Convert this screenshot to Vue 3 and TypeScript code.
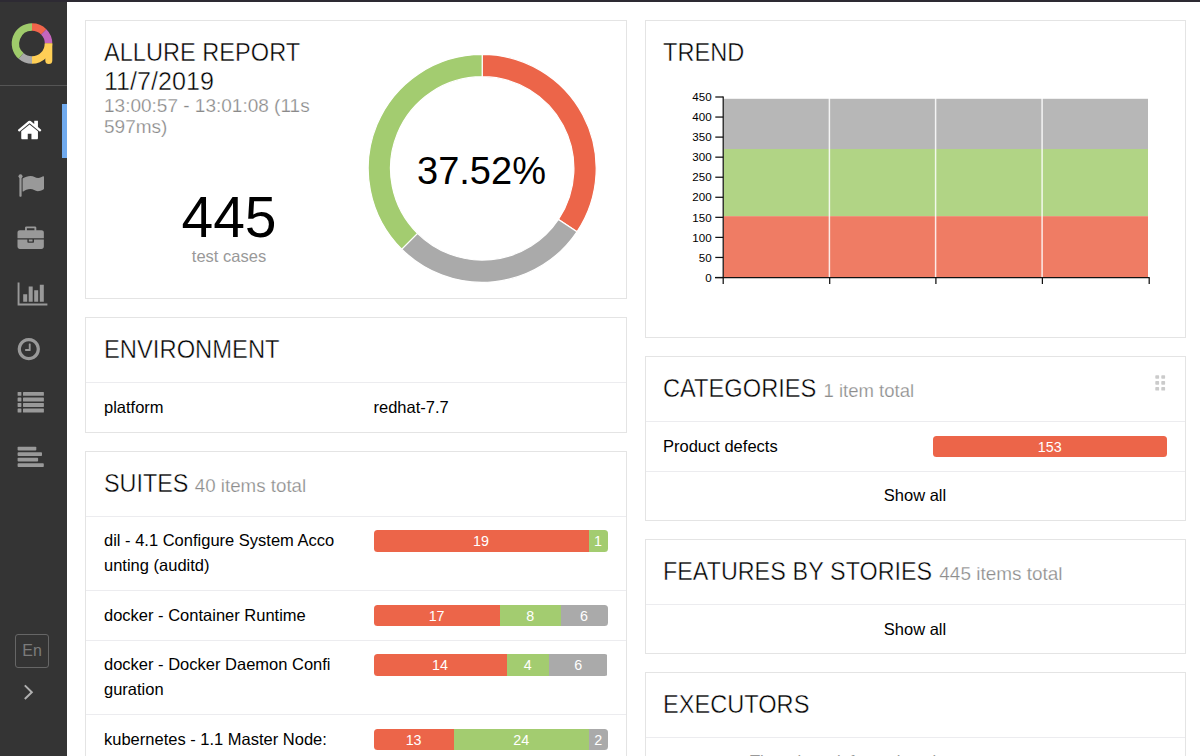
<script setup lang="ts">
type Status = 'failed' | 'passed' | 'skipped'

interface Segment {
  status: Status
  count: number
  width: number
}

interface Suite {
  lines: string[]
  segments: Segment[]
}

const suites: Suite[] = [
  {
    lines: ['dil - 4.1 Configure System Acco', 'unting (auditd)'],
    segments: [
      { status: 'failed', count: 19, width: 215.5 },
      { status: 'passed', count: 1, width: 19 },
    ],
  },
  {
    lines: ['docker - Container Runtime'],
    segments: [
      { status: 'failed', count: 17, width: 126.5 },
      { status: 'passed', count: 8, width: 61 },
      { status: 'skipped', count: 6, width: 47 },
    ],
  },
  {
    lines: ['docker - Docker Daemon Confi', 'guration'],
    segments: [
      { status: 'failed', count: 14, width: 133.4 },
      { status: 'passed', count: 4, width: 42.3 },
      { status: 'skipped', count: 6, width: 58.8 },
    ],
  },
  {
    lines: ['kubernetes - 1.1 Master Node:'],
    segments: [
      { status: 'failed', count: 13, width: 80.4 },
      { status: 'passed', count: 24, width: 135.4 },
      { status: 'skipped', count: 2, width: 18.7 },
    ],
  },
]

// Donut ring, clockwise from twelve o'clock
function ring(cx: number, cy: number, outer: number, inner: number, from: number, to: number): string {
  const pt = (r: number, t: number) => {
    const a = t * Math.PI * 2
    return `${(cx + r * Math.sin(a)).toFixed(2)} ${(cy - r * Math.cos(a)).toFixed(2)}`
  }
  const large = to - from > 0.5 ? 1 : 0
  return `M${pt(outer, from)}A${outer} ${outer} 0 ${large} 1 ${pt(outer, to)}L${pt(inner, to)}A${inner} ${inner} 0 ${large} 0 ${pt(inner, from)}Z`
}

const total = 445
const donut = [
  { status: 'failed', d: ring(115.2, 115.4, 114, 91.7, 0, 153 / total) },
  { status: 'skipped', d: ring(115.2, 115.4, 114, 91.7, 153 / total, 278 / total) },
  { status: 'passed', d: ring(115.2, 115.4, 114, 91.7, 278 / total, 1) },
]

const logo = [
  { color: '#f1654b', d: ring(32, 43.5, 20.3, 12.8, 0, 0.125) },
  { color: '#c566bd', d: ring(32, 43.5, 20.3, 12.8, 0.125, 0.25) },
  { color: '#ffcf56', d: ring(32, 43.5, 20.3, 12.8, 0.25, 0.5) },
  { color: '#a9a9a9', d: ring(32, 43.5, 20.3, 12.8, 0.5, 0.615) },
  { color: '#9fcb6b', d: ring(32, 43.5, 20.3, 12.8, 0.615, 1) },
]

const yTicks = [450, 400, 350, 300, 250, 200, 150, 100, 50, 0]
const tickY = (v: number) => 187.5 - v * 0.4011
const xTicks = [78.5, 185, 291.2, 397.7, 504.5]

const nav = ['home', 'flag', 'briefcase', 'chart', 'clock', 'list', 'align']
</script>

<template>
  <div class="app">
    <aside class="side">
      <div class="brand">
        <svg width="67" height="83" viewBox="0 2 67 83">
          <path v-for="(s, i) in logo" :key="i" :d="s.d" :fill="s.color" />
          <path d="M44.8 43.5H52.3V60.4A3.5 3.5 0 0 1 45.3 60.4V58L43 55L44.8 50Z" fill="#ffcf56" />
        </svg>
      </div>
      <nav class="nav">
        <a v-for="(name, i) in nav" :key="name" class="item" :class="{ active: i === 0 }">
          <svg width="62" height="54.4" :viewBox="`0 ${103.6 + i * 54.4} 62 54.4`" fill="currentColor">
            <g v-if="name === 'home'" transform="translate(16.6 116.6) scale(.0145)">
              <path d="M1472 992v480q0 26-19 45t-45 19h-384v-384h-256v384h-384q-26 0-45-19t-19-45v-480q0-1 .5-3t.5-3l575-474 575 474q1 2 1 6zm223-69l-62 74q-8 9-21 11h-3q-13 0-21-7l-692-577-692 577q-12 8-24 7-13-2-21-11l-62-74q-8-10-7-23.5t11-21.5l719-599q32-26 76-26t76 26l244 204v-195q0-14 9-23t23-9h192q14 0 23 9t9 23v408l219 182q10 8 11 21.5t-7 23.5z" />
            </g>
            <g v-else-if="name === 'flag'">
              <circle cx="20.5" cy="176.2" r="2" />
              <rect x="19.4" y="176" width="2.2" height="20.8" rx=".8" />
              <path d="M22.6 178.6C25 177 28 175.9 30.4 175.9C34 175.9 35.3 178 38.2 178C40.2 178 42 176.8 43 176.3Q44 175.9 44 177V188.6Q44 189.2 43.4 189.5C41.3 190.6 39.6 191.2 37.8 191.2C35 191.2 33.4 189.1 30.2 189.1C27.4 189.1 25.2 190.3 23.4 191.4Q22.6 191.8 22.6 191Z" />
            </g>
            <g v-else-if="name === 'briefcase'" transform="translate(17.5 226.8) scale(.0147)">
              <path d="M640 256h512v-128h-512v128zm1152 640v480q0 66-47 113t-113 47h-1472q-66 0-113-47t-47-113v-480h672v160q0 26 19 45t45 19h320q26 0 45-19t19-45v-160h672zm-768 0v128h-256v-128h256zm768-480v384h-1792v-384q0-66 47-113t113-47h352v-160q0-40 28-68t68-28h576q40 0 68 28t28 68v160h352q66 0 113 47t47 113z" />
            </g>
            <path v-else-if="name === 'chart'" d="M17.6 282.2h1.9v21.1h27.9v1.9H17.6zM23.2 294h4v7.5h-4zM28.7 286.3h4v15.2h-4zM34.2 290.1h4v11.4h-4zM39.8 284.5h4v17h-4z" />
            <g v-else-if="name === 'clock'" transform="translate(15.8 336.3) scale(.0145)">
              <path d="M1024 544v448q0 14-9 23t-23 9h-320q-14 0-23-9t-9-23v-64q0-14 9-23t23-9h224v-352q0-14 9-23t23-9h64q14 0 23 9t9 23zm416 352q0-148-73-273t-198-198-273-73-273 73-198 198-73 273 73 273 198 198 273 73 273-73 198-198 73-273zm224 0q0 209-103 385.5t-279.5 279.5-385.5 103-385.5-103-279.5-279.5-103-385.5 103-385.5 279.5-279.5 385.5-103 385.5 103 279.5 279.5 103 385.5z" />
            </g>
            <g v-else-if="name === 'list'">
              <template v-for="y in [392.5, 398.1, 403.6, 409.2]" :key="y">
                <rect x="17.6" :y="y" width="3.8" height="3.9" rx=".5" />
                <rect x="23" :y="y" width="20.9" height="3.9" rx=".5" />
              </template>
            </g>
            <g v-else>
              <rect x="17.6" y="446.7" width="18.7" height="3.8" rx=".8" />
              <rect x="17.6" y="452.2" width="24.4" height="3.8" rx=".8" />
              <rect x="17.6" y="457.8" width="20.5" height="3.8" rx=".8" />
              <rect x="17.6" y="463.3" width="26.2" height="3.8" rx=".8" />
            </g>
          </svg>
        </a>
      </nav>
      <div class="foot">
        <button class="lang">En</button>
        <svg class="chevron" width="12" height="18" viewBox="0 0 12 18" fill="none">
          <path d="M1.8 2.4L8.8 9.2L1.8 16" stroke="#b0b0b0" stroke-width="2" />
        </svg>
      </div>
    </aside>

    <main class="board">
      <div class="col left">
        <section class="card summary">
          <div class="info">
            <h2 class="title">ALLURE REPORT</h2>
            <h2 class="title date">11/7/2019</h2>
            <div class="time">13:00:57 - 13:01:08 (11s<br>597ms)</div>
            <div class="count">445</div>
            <div class="caption">test cases</div>
          </div>
          <svg class="donut" width="230" height="230" viewBox="0 0 230 230">
            <path v-for="s in donut" :key="s.status" :d="s.d" :class="s.status" stroke="#fff" stroke-width="1.2" />
            <text x="114.5" y="131" text-anchor="middle">37.52%</text>
          </svg>
        </section>

        <section class="card">
          <header class="head"><h2 class="title env-title">ENVIRONMENT</h2></header>
          <div class="row env"><div class="name">platform</div><div class="value">redhat-7.7</div></div>
        </section>

        <section class="card">
          <header class="head"><h2 class="title suites">SUITES <small>40 items total</small></h2></header>
          <div v-for="s in suites" :key="s.lines[0]" class="row">
            <div class="name"><div v-for="l in s.lines" :key="l">{{ l }}</div></div>
            <div class="bar">
              <div v-for="g in s.segments" :key="g.status" :class="g.status" :style="{ flexGrow: g.width }">{{ g.count }}</div>
            </div>
          </div>
        </section>
      </div>

      <div class="col right">
        <section class="card trend">
          <h2 class="title">TREND</h2>
          <svg class="chart" width="539" height="220" viewBox="0 0 539 220">
            <rect class="skipped" x="78.5" y="8.8" width="424.5" height="50.2" opacity=".85" />
            <rect class="passed" x="78.5" y="59" width="424.5" height="67.2" opacity=".85" />
            <rect class="failed" x="78.5" y="126.2" width="424.5" height="61.3" opacity=".85" />
            <g stroke="#fff" stroke-width="1.5" opacity=".85">
              <line v-for="x in xTicks.slice(1, 4)" :key="x" :x1="x - .6" :x2="x - .6" y1="7" y2="187" />
            </g>
            <g stroke="#111" stroke-width="1.25">
              <line x1="78.2" x2="78.2" y1="6.4" y2="188" />
              <line x1="70" x2="504.6" y1="187.5" y2="187.5" />
              <line v-for="v in yTicks" :key="v" x1="70.3" x2="78.2" :y1="tickY(v)" :y2="tickY(v)" />
              <line v-for="(x, i) in xTicks" :key="x" :x1="i ? x - .3 : 78.2" :x2="i ? x - .3 : 78.2" y1="187.5" y2="194" />
            </g>
            <text v-for="v in yTicks" :key="v" x="66.7" :y="tickY(v) + 4.2" text-anchor="end">{{ v }}</text>
          </svg>
        </section>

        <section class="card categories">
          <header class="head">
            <h2 class="title cats">CATEGORIES <small>1 item total</small></h2>
            <svg class="grip" width="11" height="16" viewBox="0 0 11 16" fill="#cbcbcb">
              <template v-for="y in [0.2, 6.1, 12]" :key="y">
                <rect x=".3" :y="y" width="3.8" height="3.6" rx=".7" />
                <rect x="6.3" :y="y" width="3.8" height="3.6" rx=".7" />
              </template>
            </svg>
          </header>
          <div class="row product">
            <div class="name">Product defects</div>
            <div class="bar"><div class="failed">153</div></div>
          </div>
          <a class="row all">Show all</a>
        </section>

        <section class="card">
          <header class="head"><h2 class="title features">FEATURES BY STORIES <small>445 items total</small></h2></header>
          <a class="row all last">Show all</a>
        </section>

        <section class="card">
          <header class="head"><h2 class="title">EXECUTORS</h2></header>
          <div class="row all empty">There is no information about tests executors</div>
        </section>
      </div>
    </main>
  </div>
</template>

<style>
html, body {
  margin: 0;
  overflow: hidden;
}
</style>

<style scoped>
.app {
  box-sizing: border-box;
  display: flex;
  width: 1200px;
  height: 756px;
  overflow: hidden;
  border-top: 2px solid #2d2a33;
  background: #fff;
  color: #000;
  font: 16.5px/24.8px "Liberation Sans", Arial, sans-serif;
}
.side {
  display: flex;
  flex-direction: column;
  flex: none;
  width: 67px;
  background: #343434;
  color: #999;
}
.brand {
  height: 83px;
  border-bottom: 1px solid #555;
}
.brand svg, .item svg { display: block; }
.nav { padding-top: 17.5px; }
.item {
  display: block;
  box-sizing: border-box;
  height: 54.4px;
  border-right: 4.5px solid transparent;
}
.item.active {
  color: #fff;
  border-right: 5px solid #70aaee;
}
.foot {
  display: flex;
  flex-direction: column;
  margin-top: auto;
  padding: 0 0 55px 15px;
}
.lang {
  box-sizing: border-box;
  width: 34px;
  height: 34px;
  padding: 0;
  border: 1px solid #666;
  border-radius: 3px;
  background: none;
  color: #7b7b7b;
  font: 16px/30px "Liberation Sans", Arial, sans-serif;
}
.chevron { margin: 15px 0 0 7.5px; }

.board {
  display: flex;
  flex: 1;
  gap: 18px;
  padding: 18px 14px 0 18px;
}
.col {
  display: flex;
  flex-direction: column;
  gap: 18px;
}
.left { width: 542px; }
.right { width: 541px; }
.card {
  box-sizing: border-box;
  flex: none;
  border: 1px solid #e4e4e4;
  background: #fff;
}
.title {
  margin: 0;
  font-size: 25.5px;
  font-weight: 400;
  line-height: 28.5px;
  white-space: nowrap;
  transform: scaleX(.925);
  transform-origin: 0 0;
  -webkit-text-stroke: .45px #fff;
}
.title small {
  display: inline-block;
  color: #8c8c8c;
  font-size: 19px;
  transform: scaleX(1.075);
  transform-origin: 0 0;
  -webkit-text-stroke: .25px #fff;
}
.title.date { transform: scaleX(.985); }
.title.env-title { transform: scaleX(.932); }
.title.suites { transform: scaleX(.917); }
.title.cats { transform: scaleX(.928); word-spacing: 1px; }
.title.features { transform: scaleX(.915); word-spacing: .4px; }
.title.cats small { word-spacing: 0; transform: scaleX(1.05); }
.title.features small { word-spacing: 0; transform: scaleX(1.09); }
.summary {
  display: flex;
  height: 279px;
}
.info {
  width: 250px;
  padding: 17px 0 0 18px;
}
.time {
  color: #8a8a8a;
  font-size: 19px;
  line-height: 21.4px;
  white-space: nowrap;
  -webkit-text-stroke: .25px #fff;
}
.count {
  margin-top: 47px;
  font-size: 57px;
  line-height: 64px;
  text-align: center;
}
.caption {
  margin-top: -5px;
  color: #999;
  font-size: 16.5px;
  text-align: center;
}
.donut { margin: 32px 0 0 13px; }
.donut text { font-size: 38px; fill: #000; }
path.failed, rect.failed { fill: #ec6549; }
path.passed, rect.passed { fill: #a3cc70; }
path.skipped, rect.skipped { fill: #aaa; }

.trend {
  height: 318px;
  padding-top: 17px;
}
.trend .title { margin-left: 17px; }
.chart { display: block; margin: 23px 0 0 -1px; }
.chart text { font-size: 11.6px; fill: #000; }

.head {
  box-sizing: border-box;
  display: flex;
  justify-content: space-between;
  height: 64px;
  padding: 17px 19px 0 18px;
}
.right .head { padding-left: 17px; }
.row {
  display: flex;
  justify-content: space-between;
  box-sizing: border-box;
  min-height: 49.6px;
  padding: 11.4px 18.5px 12.4px 18px;
  border-top: 1px solid #ececef;
}
.right .row { padding: 11.4px 18px 12.4px 17px; min-height: 50px; }
.name { white-space: nowrap; }
.row.env {
  justify-content: flex-start;
  height: 50px;
  padding-top: 12.4px;
  padding-bottom: 0;
}
.env .name { width: 269.5px; }
.bar {
  display: flex;
  width: 234px;
  height: 21.4px;
  margin-top: 2px;
  overflow: hidden;
  border-radius: 3.5px;
  color: #fff;
  font-size: 14.3px;
  line-height: 22.6px;
  text-align: center;
}
.bar div { flex: 1 1 0; min-width: 0; }
.bar .failed { background: #ec6549; }
.bar .passed { background: #a3cc70; }
.bar .skipped { background: #aaa; }
.categories { height: 165px; }
.right .row.product { padding-top: 12.4px; padding-bottom: 0; height: 50px; }
.product .bar { width: 234.5px; margin-top: 1.6px; }
.right .row.all { justify-content: center; }
.right .row.last { min-height: 49px; height: 49px; padding-top: 12px; padding-bottom: 0; }
.right .row.empty {
  padding-top: 11.4px;
  color: #999;
  font-size: 16.5px;
}
.grip { margin-top: 1px; }
</style>
